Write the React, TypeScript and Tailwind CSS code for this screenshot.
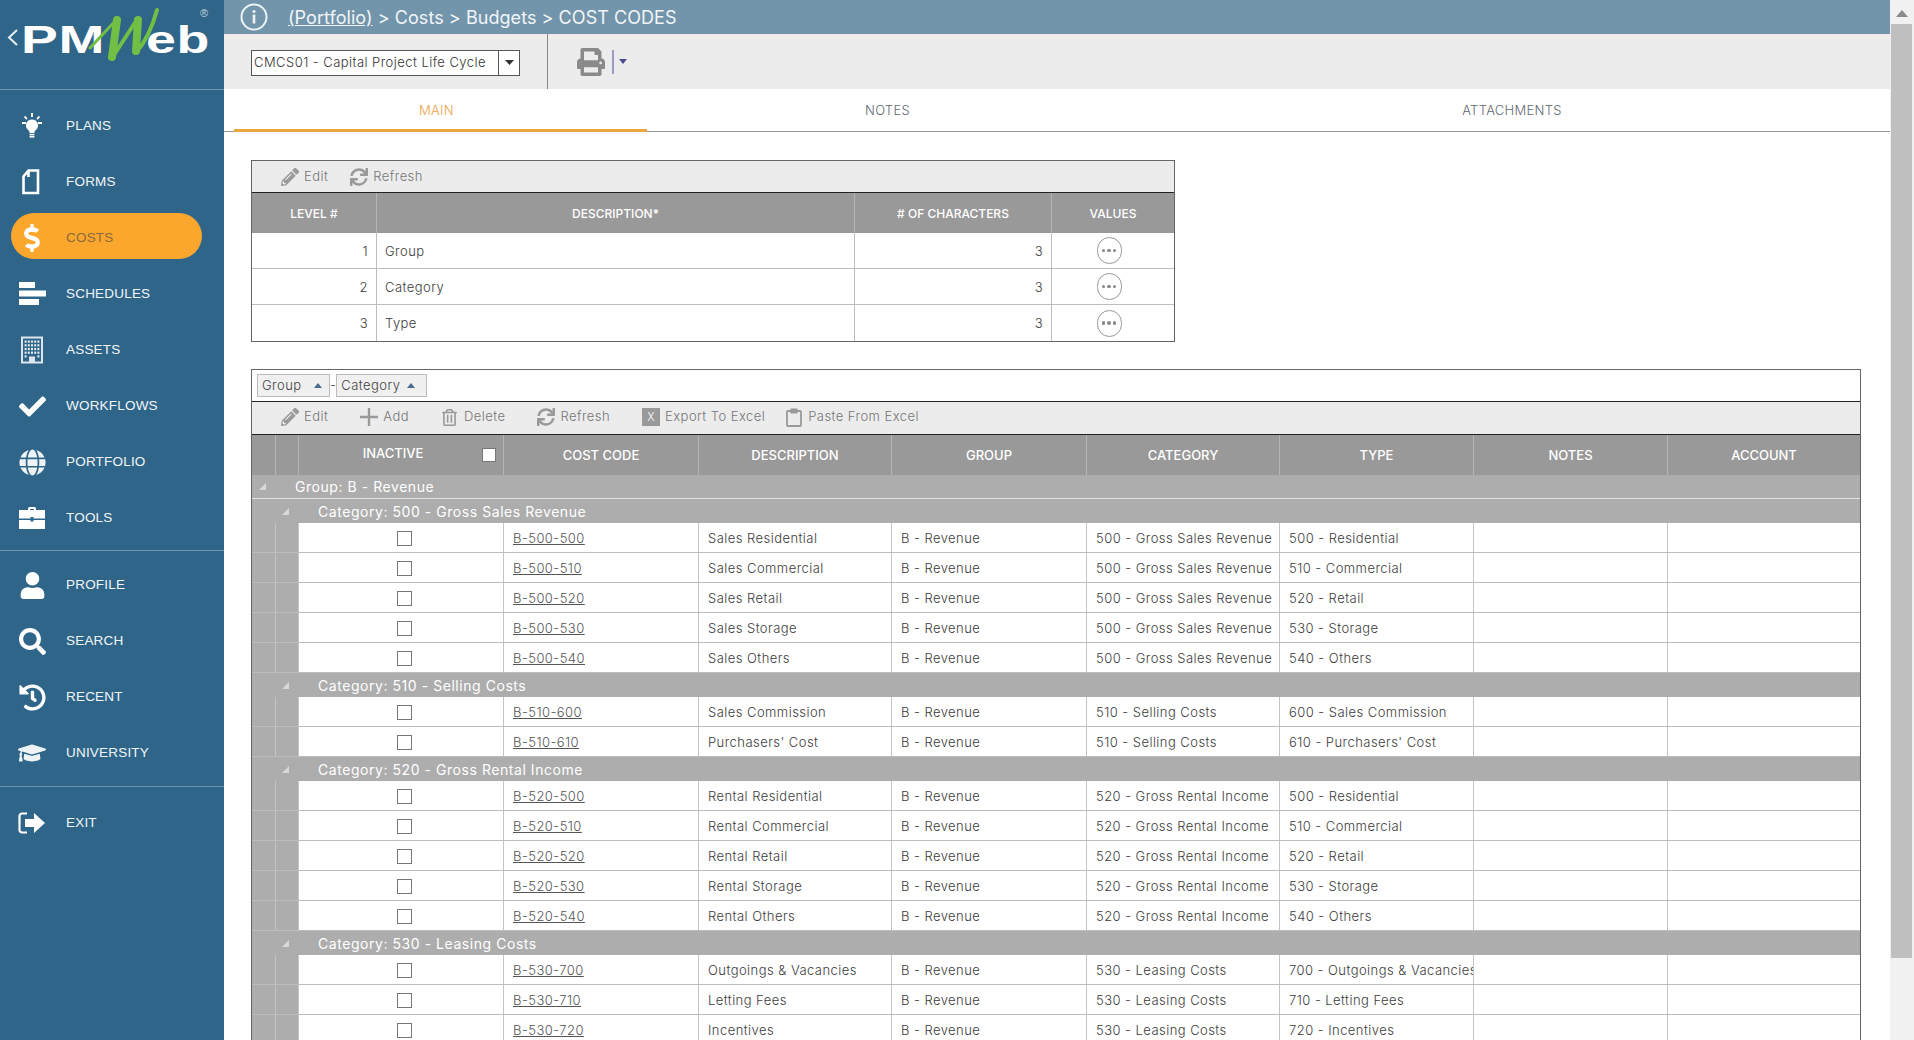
import React from "react";
import {
  FaCheck, FaGlobe, FaUser, FaSearch, FaHistory, FaGraduationCap, FaDollarSign, FaPrint, FaPencilAlt, FaRegTrashAlt, FaSync,
} from "react-icons/fa";

const Bulb = () => (
  <svg width="28" height="28" viewBox="0 0 28 28" fill="#fff">
    <path d="M14 7.5a6 6 0 0 0-3.6 10.8c.9.8 1.1 1.6 1.2 2.7h4.8c.1-1.1.3-1.9 1.2-2.7A6 6 0 0 0 14 7.5z" />
    <rect x="11.6" y="21.8" width="4.8" height="1.6" />
    <rect x="11.6" y="24" width="4.8" height="1.6" />
    <path d="M14 1v4M4 11h4M20 11h4M6.5 4.5l2.5 2.5M21.5 4.5 19 7" stroke="#fff" strokeWidth="1.8" />
  </svg>
);
const FormIcon = () => (
  <svg width="28" height="28" viewBox="0 0 28 28" fill="none" stroke="#fff" strokeWidth="2.6">
    <path d="M10.5 2.5h9.5v22.5H5.5V8.5L10.5 2.5zM10.500 2.500V9" />
  </svg>
);
const ScheduleIcon = () => (
  <svg width="28" height="24" viewBox="0 0 28 24" fill="#fff">
    <rect x="1" y="0" width="16" height="6" />
    <rect x="1" y="8.5" width="27" height="6" />
    <rect x="1" y="17" width="20" height="6" />
  </svg>
);
const AssetIcon = () => {
  const dots: React.ReactNode[] = [];
  for (let r = 0; r < 5; r++) {
    for (let c = 0; c < 5; c++) {
      if (r === 4 && c > 0 && c < 4) continue;
      dots.push(<rect key={r + "-" + c} x={6.6 + c * 3.2} y={4.5 + r * 3.7} width="2" height="2.2" fill="#e4edf3" />);
    }
  }
  return (
    <svg width="28" height="28" viewBox="0 0 28 28">
      <path d="M4 1.500h20v25H4z" fill="none" stroke="#dbe6ee" strokeWidth="2" />
      {dots}
      <rect x="11" y="20.500" width="6" height="6" fill="#dbe6ee" />
    </svg>
  );
};
const Case = () => (
  <svg width="28" height="24" viewBox="0 0 28 24" fill="#fff">
    <path d="M10 4V2.500A1.500 1.500 0 0 1 11.500 1h5A1.500 1.500 0 0 1 18 2.500V4h-2V3h-4v1z" />
    <path d="M1 4h26v8.500H15.500V11h-3v1.500H1z" />
    <path d="M1 14h11.500v1.500h3V14H27v9H1z" />
  </svg>
);
const ExitIcon = () => (
  <svg width="28" height="24" viewBox="0 0 28 24">
    <path d="M9 2.500H4A2.500 2.500 0 0 0 1.500 5v14A2.500 2.500 0 0 0 4 21.500h5" fill="none" stroke="#fff" strokeWidth="2.200" />
    <path d="M16 2l11 10-11 10v-6H7V8h9z" fill="#fff" />
  </svg>
);
const PlusIcon = () => (
  <svg width="18" height="18" viewBox="0 0 18 18"><path d="M7.800 0h2.400v7.800H18v2.400h-7.800V18H7.800v-7.800H0V7.800h7.800z" fill="#999" /></svg>
);
const ClipIcon = () => (
  <svg width="16" height="19" viewBox="0 0 16 19" fill="none">
    <rect x="1" y="3" width="14" height="15" rx="1" stroke="#999" strokeWidth="1.800" />
    <rect x="4.500" y="0.500" width="7" height="5" fill="#999" />
  </svg>
);

type NavItem = { label: string; icon: React.ReactNode; active?: boolean };
const navA: NavItem[] = [
  { label: "PLANS", icon: <Bulb /> },
  { label: "FORMS", icon: <FormIcon /> },
  { label: "COSTS", icon: <FaDollarSign size={28} color="#fff" />, active: true },
  { label: "SCHEDULES", icon: <ScheduleIcon /> },
  { label: "ASSETS", icon: <AssetIcon /> },
  { label: "WORKFLOWS", icon: <FaCheck size={27} color="#fff" /> },
  { label: "PORTFOLIO", icon: <FaGlobe size={27} color="#eef3f6" /> },
  { label: "TOOLS", icon: <Case /> },
];
const navB: NavItem[] = [
  { label: "PROFILE", icon: <FaUser size={27} color="#fff" /> },
  { label: "SEARCH", icon: <FaSearch size={27} color="#fff" /> },
  { label: "RECENT", icon: <FaHistory size={27} color="#fff" /> },
  { label: "UNIVERSITY", icon: <FaGraduationCap size={28} color="#eef3f6" /> },
];

const Nav = ({ item }: { item: NavItem }) => (
  <div className="relative flex h-[56px] items-center tracking-[0.2px]">
    {item.active && <div className="absolute left-[11px] top-[3px] h-[46px] w-[191px] rounded-full bg-[#fba72e]" />}
    <div className="relative mr-[2px] flex w-[64px] justify-center">
      <span className="flex w-[28px] items-center justify-center">{item.icon}</span>
    </div>
    <span className={"relative text-[13.5px] font-medium " + (item.active ? "text-[#8c6a3a]" : "text-[#f2f6f9]")}>
      {item.label}
    </span>
  </div>
);

const Logo = () => (
  <svg width="224" height="90" viewBox="0 0 224 90">
    <polyline points="17,30 9,37.500 17,45" fill="none" stroke="#e8eef2" strokeWidth="2" />
    <text x="21" y="52.500" fill="#fff" fontFamily="'Liberation Sans',sans-serif" fontWeight="700" fontSize="39" textLength="84" lengthAdjust="spacingAndGlyphs">PM</text>
    <text x="146" y="52.500" fill="#fff" fontFamily="'Liberation Sans',sans-serif" fontWeight="700" fontSize="39" textLength="64" lengthAdjust="spacingAndGlyphs">eb</text>
    <g fill="none" stroke="#71bf44" strokeLinecap="round" strokeLinejoin="round">
      <path d="M90 48 L118 18" strokeWidth="3" />
      <path d="M117 20 L112 57" strokeWidth="8" />
      <path d="M112 58 L138 18" strokeWidth="4" />
      <path d="M138 20 L136 51" strokeWidth="8" />
      <path d="M136 53 Q150 36 157 10" strokeWidth="4" />
    </g>
    <text x="200" y="17" fill="#c6d6e0" fontSize="11" fontFamily="'Liberation Sans',sans-serif">®</text>
  </svg>
);

const ToolBtn = ({ icon, label, className = "" }: { icon: React.ReactNode; label: string; className?: string }) => (
  <div className={"flex items-center text-[13px] text-[#777] " + className}>
    <span className="mr-[5px] flex w-[18px] items-center justify-center text-[#999]">{icon}</span>
    {label}
  </div>
);

const Sq = () => <div className="h-[15px] w-[15px] border border-[#777] bg-white" />;

const Tri = () => (
  <svg width="9" height="9" viewBox="0 0 9 9"><path d="M8 1v7H1z" fill="#d8d8d8" /></svg>
);

const Ellipsis = () => (
  <div className="flex h-[27px] w-[25px] items-center justify-center gap-[2px] rounded-full border-[1.500px] border-[#999] bg-white">
    <span className="h-[3.500px] w-[3.500px] rounded-full bg-[#888]" />
    <span className="h-[3.500px] w-[3.500px] rounded-full bg-[#888]" />
    <span className="h-[3.500px] w-[3.500px] rounded-full bg-[#888]" />
  </div>
);

const levels = [
  ["1", "Group"],
  ["2", "Category"],
  ["3", "Type"],
];

const groups: { title: string; cat: string; rows: [string, string, string][] }[] = [
  {
    title: "Category: 500 - Gross Sales Revenue",
    cat: "500 - Gross Sales Revenue",
    rows: [
      ["B-500-500", "Sales Residential", "500 - Residential"],
      ["B-500-510", "Sales Commercial", "510 - Commercial"],
      ["B-500-520", "Sales Retail", "520 - Retail"],
      ["B-500-530", "Sales Storage", "530 - Storage"],
      ["B-500-540", "Sales Others", "540 - Others"],
    ],
  },
  {
    title: "Category: 510 - Selling Costs",
    cat: "510 - Selling Costs",
    rows: [
      ["B-510-600", "Sales Commission", "600 - Sales Commission"],
      ["B-510-610", "Purchasers' Cost", "610 - Purchasers' Cost"],
    ],
  },
  {
    title: "Category: 520 - Gross Rental Income",
    cat: "520 - Gross Rental Income",
    rows: [
      ["B-520-500", "Rental Residential", "500 - Residential"],
      ["B-520-510", "Rental Commercial", "510 - Commercial"],
      ["B-520-520", "Rental Retail", "520 - Retail"],
      ["B-520-530", "Rental Storage", "530 - Storage"],
      ["B-520-540", "Rental Others", "540 - Others"],
    ],
  },
  {
    title: "Category: 530 - Leasing Costs",
    cat: "530 - Leasing Costs",
    rows: [
      ["B-530-700", "Outgoings & Vacancies", "700 - Outgoings & Vacancies"],
      ["B-530-710", "Letting Fees", "710 - Letting Fees"],
      ["B-530-720", "Incentives", "720 - Incentives"],
    ],
  },
];

const cols = "grid grid-cols-[24px_23px_205px_195px_193px_195px_193px_194px_194px_192px]";
const levelCols = "grid grid-cols-[125px_478px_197px_122px]";
const cell = "flex items-center overflow-hidden whitespace-nowrap border-r border-[#c4c4c4] pl-[9px] pt-[2px]";
const hcell = "flex items-center justify-center border-r border-[#b4b4b4] pt-[1px]";

const DataRow = ({ r, cat }: { r: [string, string, string]; cat: string }) => (
  <div className={cols + " h-[30px] border-b border-[#bdbdbd] text-[13px] text-[#3c3c3c]"}>
    <div className="border-r border-[#c4c4c4] bg-[#adadad]" />
    <div className="border-r border-[#c4c4c4] bg-[#adadad]" />
    <div className="flex items-center justify-center border-r border-[#c4c4c4] pl-[6px] pt-[1px]"><Sq /></div>
    <div className={cell}><span className="underline text-[#555]">{r[0]}</span></div>
    <div className={cell}>{r[1]}</div>
    <div className={cell}>B - Revenue</div>
    <div className={cell}>{cat}</div>
    <div className={cell}>{r[2]}</div>
    <div className={cell} />
    <div className="" />
  </div>
);

const Scrollbar = () => (
  <div className="flex w-[24px] shrink-0 flex-col bg-[#f1f1f1]">
    <div className="flex h-[24px] items-center justify-center pt-[2px]">
      <svg width="12" height="7" viewBox="0 0 12 7"><path d="M6 0l6 7H0z" fill="#8a8a8a" /></svg>
    </div>
    <div className="ml-[1px] h-[934px] w-[21px] bg-[#bfbfbf]" />
  </div>
);

export default function App() {
  return (
    <div className="flex h-[1040px] w-[1914px] overflow-hidden bg-white font-['Inter',sans-serif] font-light tracking-[0.45px]">
      <aside className="flex w-[224px] shrink-0 flex-col bg-[#2f6588] font-['Liberation_Sans',sans-serif]">
        <div className="h-[90px] shrink-0 border-b border-[#6f97b0]"><Logo /></div>
        <div className="pb-[4px] pt-[8px]">{navA.map((n) => <Nav key={n.label} item={n} />)}</div>
        <div className="border-t border-[#6f97b0] pb-[5px] pt-[6px]">{navB.map((n) => <Nav key={n.label} item={n} />)}</div>
        <div className="border-t border-[#6f97b0] pt-[8px]"><Nav item={{ label: "EXIT", icon: <ExitIcon /> }} /></div>
      </aside>

      <main className="min-w-0 flex-1 overflow-hidden">
        <header className="flex h-[34px] items-center bg-[#7395ab] text-[18px] font-normal tracking-[0.05px] text-[#f1f5f8]">
          <svg className="ml-[16px]" width="28" height="28" viewBox="0 0 28 28" fill="none">
            <circle cx="14" cy="14" r="12.500" stroke="#eef3f6" strokeWidth="2" />
            <circle cx="14" cy="8.500" r="1.600" fill="#eef3f6" />
            <rect x="12.700" y="11.500" width="2.600" height="9" fill="#eef3f6" />
          </svg>
          <span className="ml-[20px] pt-[1px]"><span className="underline">(Portfolio)</span> &gt; Costs &gt; Budgets &gt; COST CODES</span>
        </header>

        <div className="flex h-[55px] items-center bg-[#ececec] shadow-[inset_0_5px_0_#f4ecea]">
          <div className="ml-[27px] mt-[2px] flex h-[26px] w-[269px] items-center border border-[#555] bg-white text-[13px] text-[#333]">
            <span className="flex-1 whitespace-nowrap pl-[2px]">CMCS01 - Capital Project Life Cycle</span>
            <span className="flex h-full w-[21px] items-center justify-center border-l border-[#555]">
              <svg width="9" height="5" viewBox="0 0 9 5"><path d="M0 0h9L4.500 5z" fill="#333" /></svg>
            </span>
          </div>
          <div className="ml-[27px] h-full w-px bg-[#888]" />
          <FaPrint className="ml-[29px] text-[#8a8a8a]" size={28} />
          <div className="ml-[7px] h-[24px] w-[2px] bg-[#9a9ac4]" />
          <svg className="ml-[5px]" width="8" height="5" viewBox="0 0 8 5"><path d="M0 0h8L4 5z" fill="#4a4a90" /></svg>
        </div>

        <nav className="grid h-[43px] grid-cols-[10px_413px_480px_1fr] border-b border-[#999] text-[13px] tracking-[0.3px]">
          <div />
          <div className="relative flex items-center justify-center pr-[8px] pt-[2px] text-[#eba24a]">
            MAIN
            <div className="absolute bottom-[-1px] left-0 right-0 h-[3px] bg-[#e8a83e]" />
          </div>
          <div className="flex items-center justify-center pl-[1px] pt-[2px] text-[#5f6a72]">NOTES</div>
          <div className="flex items-center justify-center pl-[7px] pt-[2px] text-[#5f6a72]">ATTACHMENTS</div>
        </nav>

        <section className="ml-[27px] mt-[28px] w-[924px] border border-[#666]">
          <div className="flex h-[32px] items-center gap-[22px] border-b-[1.500px] border-[#222] bg-[#ececec] pl-[29px]">
            <ToolBtn icon={<FaPencilAlt size={18} />} label="Edit" />
            <ToolBtn icon={<FaSync size={18} />} label="Refresh" />
          </div>
          <div className={levelCols + " h-[40px] bg-[#999] text-[12px] font-medium tracking-normal text-white"}>
            <div className={hcell}>LEVEL #</div>
            <div className={hcell}>DESCRIPTION*</div>
            <div className={hcell}># OF CHARACTERS</div>
            <div className="flex items-center justify-center pt-[1px]">VALUES</div>
          </div>
          {levels.map(([n, d], i) => (
            <div key={n} className={levelCols + " h-[36px] text-[13px] text-[#3c3c3c] " + (i < 2 ? "border-b border-[#bdbdbd]" : "")}>
              <div className="flex items-center justify-end border-r border-[#bdbdbd] pr-[8px] pt-[2px]">{n}</div>
              <div className="flex items-center border-r border-[#bdbdbd] pl-[8px] pt-[2px]">{d}</div>
              <div className="flex items-center justify-end border-r border-[#bdbdbd] pr-[8px] pt-[2px]">3</div>
              <div className="flex items-center justify-center pr-[8px]"><Ellipsis /></div>
            </div>
          ))}
        </section>

        <section className="ml-[27px] mt-[27px] w-[1610px] border-x border-t border-[#666]">
          <div className="flex h-[32px] items-center border-b-[1.500px] border-[#222] pl-[5px] text-[13px] text-[#444]">
            <div className="flex h-[23px] w-[73px] items-center justify-between border border-[#bbb] bg-[#f0f0f0] px-[4px]">
              Group
              <svg className="mr-[3px]" width="8" height="5" viewBox="0 0 8 5"><path d="M4 0l4 5H0z" fill="#4a6a90" /></svg>
            </div>
            <span>-</span>
            <div className="flex h-[23px] w-[91px] items-center justify-between border border-[#bbb] bg-[#f0f0f0] px-[4px]">
              Category
              <svg className="mr-[7px]" width="8" height="5" viewBox="0 0 8 5"><path d="M4 0l4 5H0z" fill="#4a6a90" /></svg>
            </div>
          </div>
          <div className="flex h-[33px] items-center gap-[32px] border-b-[1.500px] border-[#222] bg-[#ececec] pb-[2px] pl-[29px]">
            <ToolBtn icon={<FaPencilAlt size={18} />} label="Edit" />
            <ToolBtn icon={<PlusIcon />} label="Add" />
            <ToolBtn icon={<FaRegTrashAlt size={17} />} label="Delete" />
            <ToolBtn icon={<FaSync size={18} />} label="Refresh" />
            <ToolBtn icon={<span className="flex h-[18px] w-[18px] items-center justify-center bg-[#999] text-[11px] text-white">X</span>} label="Export To Excel" />
            <ToolBtn className="-ml-[12px]" icon={<ClipIcon />} label="Paste From Excel" />
          </div>
          <div className={cols + " h-[40px] bg-[#999] text-[13px] font-medium tracking-normal text-white"}>
            <div className={hcell} />
            <div className={hcell} />
            <div className={"relative " + hcell}>
              <span className="mb-[3px] mr-[16px]">INACTIVE</span>
              <div className="absolute right-[7px] top-[13px] h-[14px] w-[14px] border border-[#777] bg-white" />
            </div>
            <div className={hcell}>COST CODE</div>
            <div className={hcell}>DESCRIPTION</div>
            <div className={hcell}>GROUP</div>
            <div className={hcell}>CATEGORY</div>
            <div className={hcell}>TYPE</div>
            <div className={hcell}>NOTES</div>
            <div className="flex items-center justify-center pt-[1px]">ACCOUNT</div>
          </div>
          <div className="flex h-[24px] items-center border-b border-[#e4e4e4] bg-[#adadad] text-[14px] font-normal tracking-[0.55px] text-white">
            <span className="ml-[6px] mr-[28px] flex"><Tri /></span>
            Group: B - Revenue
          </div>
          {groups.map((g) => (
            <div key={g.title}>
              <div className="flex h-[24px] items-center bg-[#adadad] text-[14px] font-normal tracking-[0.55px] text-white">
                <span className="ml-[29px] mr-[28px] flex"><Tri /></span>
                {g.title}
              </div>
              {g.rows.map((r) => <DataRow key={r[0]} r={r} cat={g.cat} />)}
            </div>
          ))}
        </section>
      </main>
      <Scrollbar />
    </div>
  );
}
